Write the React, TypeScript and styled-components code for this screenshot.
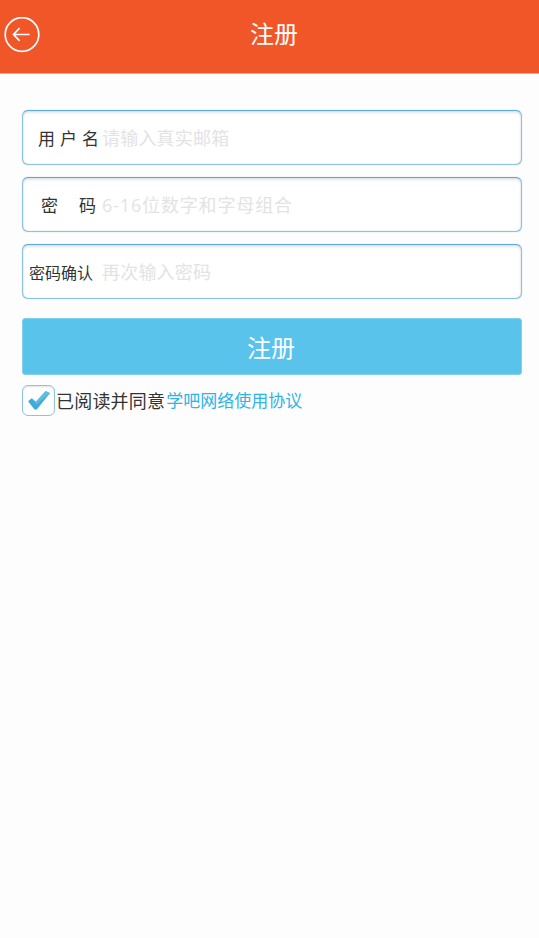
import React from 'react';
import styled, { createGlobalStyle } from 'styled-components';

const GlobalStyle = createGlobalStyle`
  html, body {
    margin: 0;
    padding: 0;
    background: #fdfdfd;
    font-family: "Noto Sans CJK SC", "Noto Sans", sans-serif;
  }
  * { box-sizing: border-box; }
`;

const Page = styled.div`
  width: 539px;
  height: 938px;
  overflow: hidden;
  background: #fdfdfd;
`;

const Header = styled.header`
  height: 74px;
  padding-left: 9px;
  background: #f15628;
  display: flex;
  align-items: center;
  position: relative;
  justify-content: center;
  border-bottom: 1px solid #f7a78e;
`;

const BackButton = styled.button`
  position: absolute;
  left: 4px;
  top: 17px;
  width: 36px;
  height: 36px;
  padding: 0;
  border: 0;
  background: none;
`;

const Title = styled.h1`
  margin: 0 0 7px;
  font-size: 24px;
  line-height: 32px;
  font-weight: 400;
  color: #fff;
`;

const Form = styled.form`
  padding: 36px 17px 0 22px;
  display: flex;
  flex-direction: column;
`;

const Field = styled.label`
  height: 55px;
  margin-bottom: 12px;
  display: flex;
  align-items: center;
  background: #fff;
  border: 1px solid #8cc3e4;
  border-top-color: #5fa9d7;
  border-radius: 6px;
  box-shadow: inset 0 2px 3px rgba(0, 0, 0, 0.1), inset 0 0 1px rgba(120, 180, 220, 0.8),
    0 0 1px rgba(120, 180, 220, 0.7);
`;

const FieldLabel = styled.span<{ $gap?: number; $pad: number }>`
  width: 79px;
  flex: none;
  padding-left: ${(p) => p.$pad}px;
  font-size: ${(p) => (p.$gap === undefined ? 16 : 17)}px;
  letter-spacing: ${(p) => p.$gap ?? 0}px;
  color: #333;
  white-space: nowrap;
`;

const Input = styled.input<{ $tracking?: number }>`
  flex: 1;
  min-width: 0;
  height: 30px;
  border: 0;
  outline: 0;
  background: transparent;
  padding: 0;
  font-family: "Open Sans", "Noto Sans CJK SC", sans-serif;
  font-size: 18px;
  letter-spacing: ${(p) => p.$tracking ?? 0.2}px;
  color: #333;
  &::placeholder {
    color: #e3e3e3;
    opacity: 1;
  }
`;

const Submit = styled.button`
  height: 57px;
  margin-top: 7px;
  padding: 0 2px 0 0;
  border: 1px solid #85cfee;
  border-radius: 3px;
  background: #59c3ec;
  color: #fff;
  font-family: inherit;
  font-size: 24px;
  font-weight: 400;
`;

const Agreement = styled.div`
  margin-top: 9px;
  display: flex;
  align-items: center;
  font-size: 18px;
  letter-spacing: 0.2px;
  line-height: 32px;
  color: #333;
`;

const CheckBox = styled.span`
  width: 33px;
  height: 31px;
  margin-right: 1px;
  flex: none;
  border: 1px solid #8fc3e2;
  border-radius: 6px;
  background: #fff;
  box-shadow: inset 0 1px 2px rgba(0, 0, 0, 0.12);
  display: flex;
  align-items: center;
  justify-content: center;
`;

const TermsLink = styled.a`
  margin-left: 1px;
  font-size: 17px;
  letter-spacing: 0;
  color: #2fb4e6;
`;

const App = () => (
  <Page>
    <GlobalStyle />
    <Header>
      <BackButton type="button" aria-label="返回">
        <svg width="36" height="36" viewBox="0 0 36 36" fill="none" stroke="#fff" strokeWidth="1.7">
          <circle cx="18" cy="17.5" r="16.8" />
          <path d="M25.5 17.5H9.5M15.6 11.2L9.5 17.5L15.6 23.8" />
        </svg>
      </BackButton>
      <Title>注册</Title>
    </Header>
    <Form>
      <Field>
        <FieldLabel $pad={15} $gap={5}>用户名</FieldLabel>
        <Input placeholder="请输入真实邮箱" />
      </Field>
      <Field>
        <FieldLabel $pad={18} $gap={21}>密码</FieldLabel>
        <Input $tracking={0.85} placeholder="6-16位数字和字母组合" />
      </Field>
      <Field>
        <FieldLabel $pad={6}>密码确认</FieldLabel>
        <Input placeholder="再次输入密码" />
      </Field>
      <Submit type="button">注册</Submit>
      <Agreement>
        <CheckBox>
          <svg width="24" height="20" viewBox="0 0 26 22">
            <path d="M1 12.5L5 9L9.5 13L20.5 1L25 3.5L10.5 21.5H8Z" fill="#3fabd8" />
            <path d="M5 9L9.5 13L20.5 1L25 3.5L10 16Z" fill="#5cbde3" />
          </svg>
        </CheckBox>
        已阅读并同意<TermsLink>学吧网络使用协议</TermsLink>
      </Agreement>
    </Form>
  </Page>
);

export default App;
